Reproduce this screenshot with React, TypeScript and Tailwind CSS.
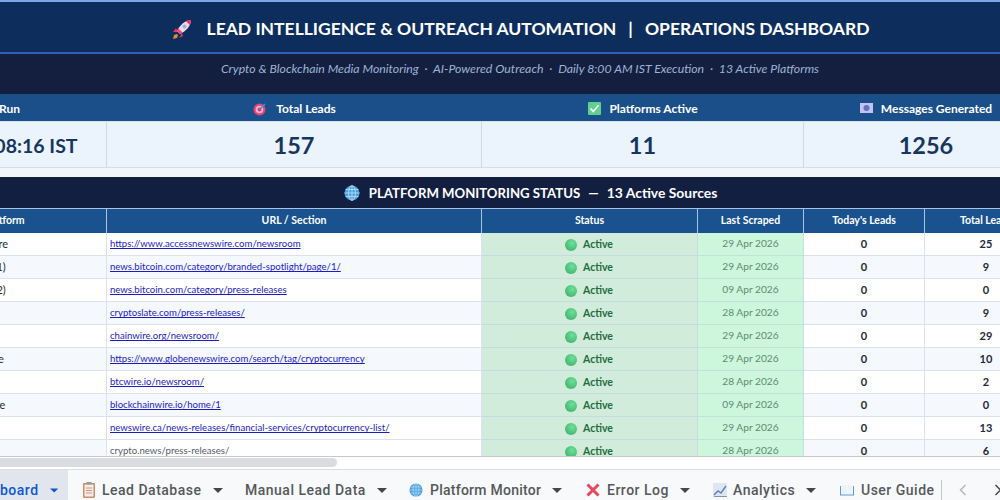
import React from "react";

const Rocket = () => (
  <svg width="22" height="22" viewBox="0 0 22 22">
    <path d="M6 16 L3 17 L2 21 L6 20 L7 17Z" fill="#e88a2c" />
    <path d="M5 10 L2 14 L7 14Z" fill="#e8336d" />
    <path d="M11 15 L8 20 L12 18Z" fill="#e8336d" />
    <path d="M20 2 C14 2 9 7 6 13 L9 16 C15 13 20 8 20 2Z" fill="#f4d7e4" />
    <path d="M20 2 C18 2 16 2.6 15 3.2 L18.8 7 C19.5 5.6 20 4 20 2Z" fill="#e8336d" />
    <path d="M6 13 L9 16 L11.5 14.4 L7.5 10.5Z" fill="#f0477f" />
    <circle cx="13.5" cy="8.5" r="2" fill="#8fb4e8" />
  </svg>
);
const Target = () => (
  <svg width="14" height="14" viewBox="0 0 14 14">
    <circle cx="6.5" cy="7.5" r="6" fill="#e8447a" />
    <circle cx="6.5" cy="7.5" r="3.8" fill="#f3b6cc" />
    <circle cx="6.5" cy="7.5" r="2" fill="#d93a6c" />
    <path d="M6.5 7.5 L12 2" stroke="#4a90d9" strokeWidth="1.6" />
  </svg>
);
const Check = () => (
  <svg width="13" height="13" viewBox="0 0 13 13">
    <rect width="13" height="13" rx="1" fill="#5fd08d" />
    <path d="M2.5 6.5 L5.3 9.5 L10.5 3.2" stroke="#fff" strokeWidth="1.8" fill="none" />
  </svg>
);
const Frame = () => (
  <svg width="13" height="11" viewBox="0 0 13 11">
    <rect width="13" height="10" fill="#c5c3ee" />
    <circle cx="6.5" cy="5" r="3" fill="#5f72c4" />
  </svg>
);
const Globe = ({ size = 16 }: { size?: number }) => (
  <svg width={size} height={size} viewBox="0 0 16 16">
    <circle cx="8" cy="8" r="7.5" fill="#4a9fe0" />
    <g stroke="#bfe0f7" strokeWidth="0.8" fill="none">
      <ellipse cx="8" cy="8" rx="3.4" ry="7.5" />
      <path d="M8 .5V15.5M.5 8H15.5M1.6 4.5H14.4M1.6 11.5H14.4" />
    </g>
  </svg>
);
const Clipboard = () => (
  <svg width="12" height="16" viewBox="0 0 12 16">
    <rect width="12" height="15" y="1" rx="1" fill="#c98f66" />
    <rect x="1.5" y="2.5" width="9" height="12" fill="#f6efe8" />
    <path d="M3 6H9M3 8.5H9M3 11H9" stroke="#e08a7a" strokeWidth="1" />
    <rect x="3.5" y="0" width="5" height="2.5" fill="#9a9a9a" />
  </svg>
);
const Cross = () => (
  <svg width="14" height="14" viewBox="0 0 14 14">
    <path d="M1.5 1.5 L12.5 12.5 M12.5 1.5 L1.5 12.5" stroke="#e8475f" strokeWidth="3" />
  </svg>
);
const Chart = () => (
  <svg width="14" height="14" viewBox="0 0 14 14">
    <rect width="14" height="14" fill="#dfe6f2" />
    <path d="M1 12 L5 8 L8 10 L13 3" stroke="#5a7fc0" strokeWidth="1.4" fill="none" />
    <path d="M1 13.5H14" stroke="#8a94a8" strokeWidth="1" />
  </svg>
);
const Book = () => (
  <svg width="14" height="12" viewBox="0 0 14 12">
    <path d="M0 2V11.5H14V2H13V10.5H1V2Z" fill="#5a9ae0" />
    <path d="M1.5 1H6.7V10H1.5ZM7.3 1H12.5V10H7.3Z" fill="#eef3fa" />
  </svg>
);
const Caret = ({ color = "#444746" }: { color?: string }) => (
  <svg width="10" height="5" viewBox="0 0 10 5">
    <path d="M0 0H10L5 5Z" fill={color} />
  </svg>
);

const rows = [
  ["AccessNewswire", "https://www.accessnewswire.com/newsroom", "29 Apr 2026", "25"],
  ["News.Bitcoin (1)", "news.bitcoin.com/category/branded-spotlight/page/1/", "29 Apr 2026", "9"],
  ["News.Bitcoin (2)", "news.bitcoin.com/category/press-releases", "09 Apr 2026", "0"],
  ["CryptoSlate", "cryptoslate.com/press-releases/", "28 Apr 2026", "9"],
  ["ChainWire", "chainwire.org/newsroom/", "29 Apr 2026", "29"],
  ["GlobeNewswire", "https://www.globenewswire.com/search/tag/cryptocurrency", "29 Apr 2026", "10"],
  ["BTCWire", "btcwire.io/newsroom/", "28 Apr 2026", "2"],
  ["Blockchain Wire", "blockchainwire.io/home/1", "09 Apr 2026", "0"],
  ["Newswire.ca", "newswire.ca/news-releases/financial-services/cryptocurrency-list/", "29 Apr 2026", "13"],
  ["Crypto.news", "crypto.news/press-releases/", "28 Apr 2026", "6"],
];

const heads = ["Platform", "URL / Section", "Status", "Last Scraped", "Today's Leads", "Total Leads", ""];

const tabs = [
  { icon: <span className="mr-[7px] flex"><Clipboard /></span>, label: "Lead Database", w: "w-[162px]", track: "" },
  { icon: null, label: "Manual Lead Data", w: "w-[164px]", track: "" },
  { icon: <span className="mr-[7px] flex"><Globe size={14} /></span>, label: "Platform Monitor", w: "w-[177px]", track: "tracking-[0.25px]" },
  { icon: <span className="mr-[7px] flex"><Cross /></span>, label: "Error Log", w: "w-[127px]", track: "" },
  { icon: <span className="mr-[6px] flex"><Chart /></span>, label: "Analytics", w: "w-[127px]", track: "" },
];

export default function App() {
  return (
    <div className="w-[1000px] h-[500px] overflow-hidden flex flex-col bg-white font-['Lato','Liberation_Sans',sans-serif]">
      <div className="h-[470px] overflow-hidden border-b border-[#dadce0] shrink-0">
        <div className="w-[1234px] -ml-[97px] h-[457px] border-b border-[#c8c8c8] overflow-hidden bg-[#f2f5fa]">
          <div className="h-[2px] bg-[#7fa6e4]" />
          <div className="h-[52px] bg-[#0d2e5c] border-b-2 border-[#2f5fb8] flex items-center justify-center gap-[14px] text-white font-bold text-[17.5px] whitespace-pre pt-[4px]">
            <Rocket />
            <span>
              LEAD INTELLIGENCE &amp; OUTREACH AUTOMATION
              <span className="mx-[12px]">|</span>
              OPERATIONS DASHBOARD
            </span>
          </div>
          <div className="h-[40px] bg-[#141f40] flex justify-center pt-[7px] text-[#9db4d4] italic text-[12.3px] whitespace-pre leading-[16px]">
            Crypto &amp; Blockchain Media Monitoring  ·  AI-Powered Outreach  ·  Daily 8:00 AM IST Execution  ·  13 Active Platforms
          </div>
          <div className="grid grid-cols-[204px_375px_322px_244px_89px] h-[28px] bg-[#1b4f8a] text-white font-bold text-[12px] border-b border-[#d5e3f3] pt-[2px]">
            <div className="flex items-center justify-center pr-[16px]">Last Run</div>
            <div className="flex items-center justify-center gap-[9px]"><Target />Total Leads</div>
            <div className="flex items-center justify-center gap-2"><Check />Platforms Active</div>
            <div className="flex items-center justify-center gap-2"><Frame />Messages Generated</div>
            <div />
          </div>
          <div className="grid grid-cols-[204px_375px_322px_244px_89px] h-[46px] bg-[#ebf3fc] text-[#17365f] font-bold border-b border-[#d5dde8]">
            <div className="flex items-center justify-center border-r border-[#d0d8e2] text-[19.5px] whitespace-nowrap pt-[2px]">29 Apr 08:16 IST</div>
            <div className="flex items-center justify-center border-r border-[#d0d8e2] text-[23.5px] pt-[2px]">157</div>
            <div className="flex items-center justify-center border-r border-[#d0d8e2] text-[23.5px] pt-[2px]">11</div>
            <div className="flex items-center justify-center text-[23.5px] pt-[2px]">1256</div>
            <div />
          </div>
          <div className="h-[9px]" />
          <div className="h-[31px] bg-[#131f40] flex items-center justify-center gap-[9px] text-white font-bold whitespace-pre pl-[21px] pt-[1px]">
            <Globe />
            <span className="text-[13.2px]">
              PLATFORM MONITORING STATUS
              <span className="mx-[8px]">—</span>
              <span className="text-[13.9px]">13 Active Sources</span>
            </span>
          </div>
          <div className="grid grid-cols-[204px_375px_216px_106px_121px_123px_89px] h-[25px] bg-[#1a5290] text-white font-bold text-[10.5px] border-t border-[#a9c3e2]">
            {heads.map((h, i) => (
              <div key={i} className="flex items-center justify-center border-r border-[#a9c3e2]">{h}</div>
            ))}
          </div>
          {rows.map((r, i) => {
            const alt = i % 2 === 1;
            const bg = alt ? "bg-[#f5f8fd]" : "bg-white";
            return (
              <div key={i} className="grid grid-cols-[204px_375px_216px_106px_121px_123px_89px] h-[23px] text-[11px]">
                <div className={`flex items-center pl-[24px] border-r border-b border-[#dbe1ee] text-[#2b2b2b] whitespace-nowrap ${bg}`}>{r[0]}</div>
                <div className={`flex items-center pl-[3px] pt-[1px] border-r border-b border-[#dbe1ee] whitespace-nowrap overflow-hidden ${i === 9 ? "bg-white" : bg}`}>
                  {i === 9 ? (
                    <span className="text-[#555b66] text-[9.6px]">{r[1]}</span>
                  ) : (
                    <a href="#" className="text-[#1c1cc4] underline text-[9.6px]">{r[1]}</a>
                  )}
                </div>
                <div className="flex items-center justify-center gap-[6px] bg-[#d1ecda] border-r border-b border-[#c3dde0] text-[#1f6b40] font-bold text-[10.5px] pt-[1px] pr-[1px]">
                  <span className="w-[12px] h-[12px] rounded-full bg-[radial-gradient(circle_at_60%_35%,#6fe09a,#35a865)]" />
                  Active
                </div>
                <div className="flex items-center justify-center bg-[#ccf7dd] border-r border-b border-[#bfe3da] text-[#5f8a72] text-[10.2px]">{r[2]}</div>
                <div className={`flex items-center justify-center border-r border-b border-[#dbe1ee] font-bold text-[#1f2937] ${bg}`}>0</div>
                <div className={`flex items-center justify-center border-r border-b border-[#dbe1ee] font-bold text-[#1f2937] ${bg}`}>{r[3]}</div>
                <div className={`border-b border-[#dbe1ee] ${bg}`} />
              </div>
            );
          })}
        </div>
        <div className="h-[12px] bg-white pt-[1px]">
          <div className="w-[337px] h-[9px] rounded-r-full bg-[#dadce0]" />
        </div>
      </div>
      <div className="h-[30px] bg-[#f8f9fa] flex items-center pt-[10px] text-[14px] tracking-[0.5px] text-[#55585b] font-['Roboto','Liberation_Sans',sans-serif] font-medium whitespace-nowrap">
        <div className="w-[68px] h-[30px] -mt-[10px] pt-[10px] bg-[#e1e6ee] flex items-center justify-end pr-[10px] gap-[11px] text-[#0b57d0] overflow-hidden shrink-0">
          <span>board</span>
          <Caret color="#0b57d0" />
        </div>
        {tabs.map((t) => (
          <div key={t.label} className={`${t.w} flex items-center shrink-0 pl-[15px]`}>
            {t.icon}
            <span className={t.track}>{t.label}</span>
            <span className="ml-[11px] flex"><Caret /></span>
          </div>
        ))}
        <div className="w-[116px] flex items-center pl-[15px] gap-[7px] shrink-0">
          <Book />
          <span>User Guide</span>
        </div>
        <div className="h-[20px] border-l border-[#c4c7c5] shrink-0" />
        <span className="ml-[17px] flex shrink-0">
          <svg width="8" height="12" viewBox="0 0 8 12"><path d="M6.5 1 L1.5 6 L6.5 11" stroke="#b4b7ba" strokeWidth="1.5" fill="none" /></svg>
        </span>
        <span className="ml-[27px] flex shrink-0">
          <svg width="8" height="12" viewBox="0 0 8 12"><path d="M1.5 1 L6.5 6 L1.5 11" stroke="#444746" strokeWidth="1.5" fill="none" /></svg>
        </span>
      </div>
    </div>
  );
}
